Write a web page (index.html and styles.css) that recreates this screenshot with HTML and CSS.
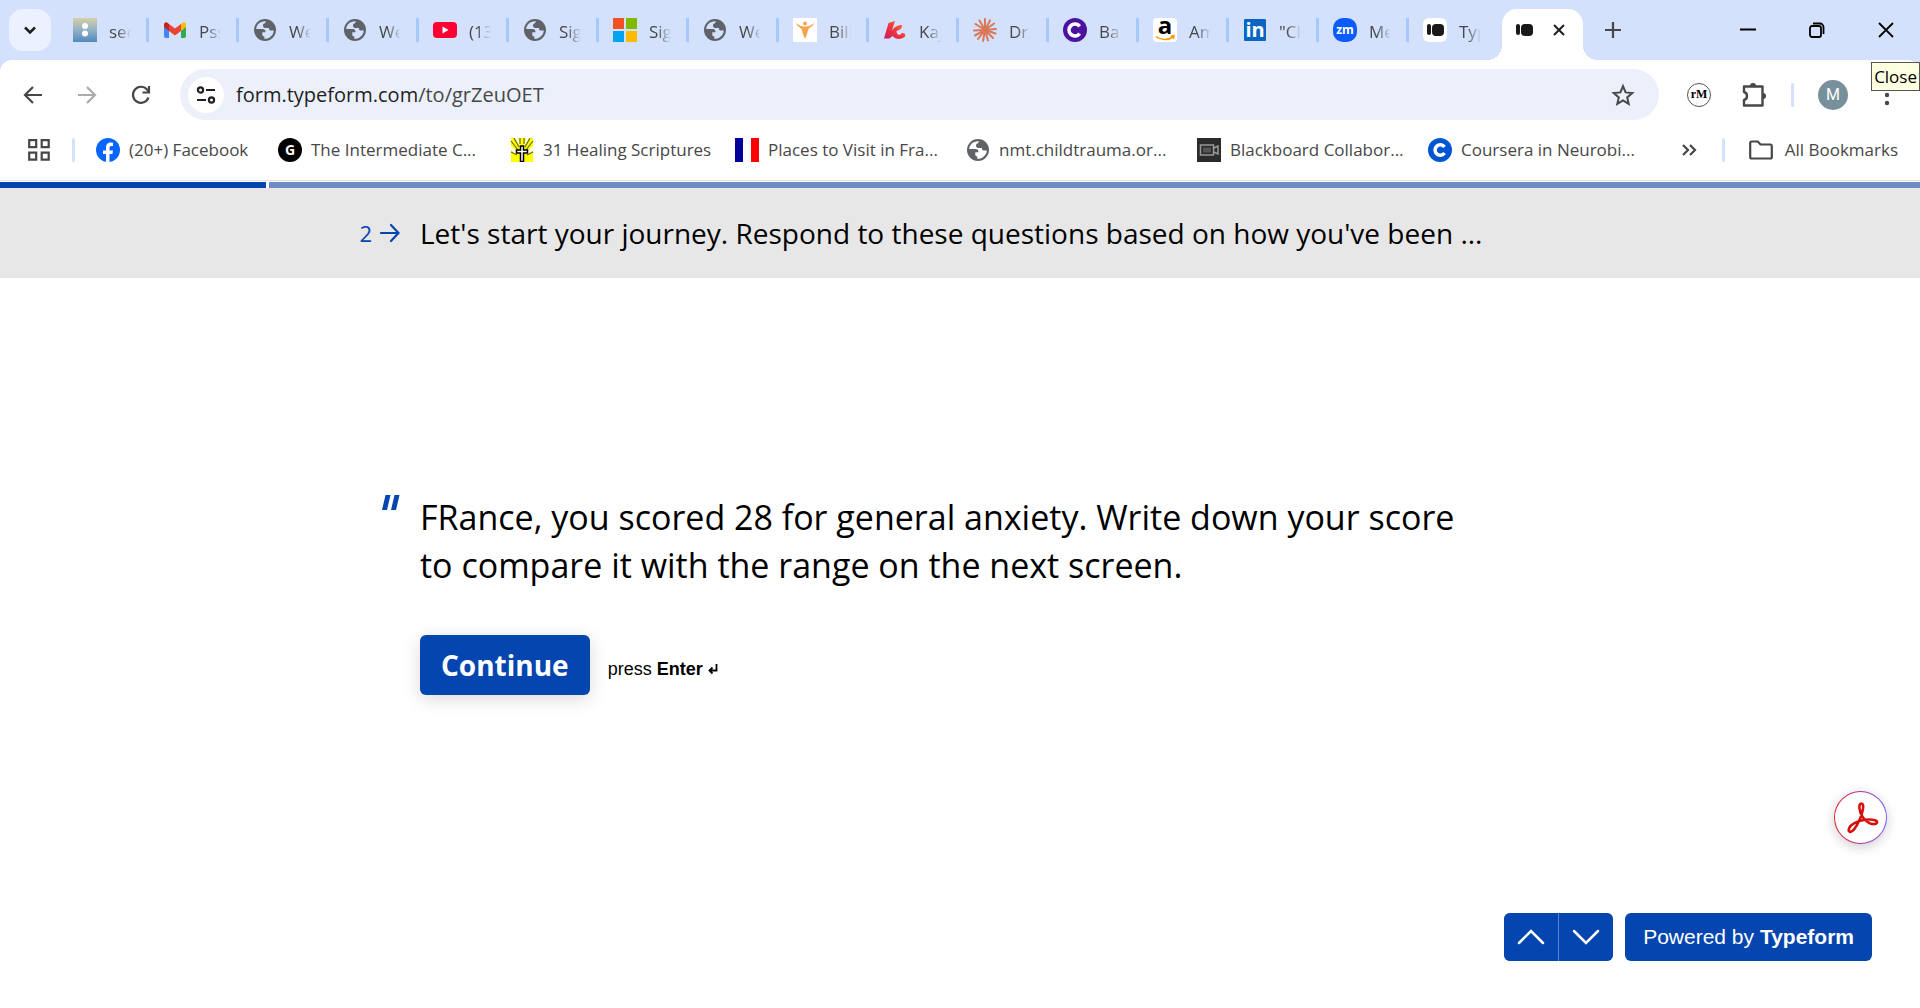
FILE: index.html
```
<!DOCTYPE html>
<html lang="en">
<head>
    <meta charset="UTF-8">
    <meta name="viewport" content="width=device-width, initial-scale=1.0">
    <title>Typeform</title>
    <link rel="stylesheet" href="styles.css">
</head>
<body>

    <!-- shared icons -->
    <svg class="sprite" aria-hidden="true">
        <symbol id="globe" viewBox="0 0 24 24">
            <circle cx="12" cy="12" r="11" fill="#5f6368"/>
            <path d="M13 3.200C7.500 2.700 3.500 6.500 3.200 11h6.300c2 0 3 1.200 3 3.200H9.300v2.600c0 1.200.8 1.700 2 1.700v2.300c5 .2 9.200-3.600 9.500-8.300h-3c-1.500 0-1.800-.8-1.800-2.500h-3.500c-1.800 0-2.500-1-2.500-2.400C10 5.800 11 5.500 12 5.300z" fill="currentColor"/>
        </symbol>
    </svg>

    <header class="browser">
        <div class="tab-strip">
            <button class="tab-search" aria-label="Search tabs">
                <svg width="14" height="14" viewBox="0 0 14 14"><path d="M2 4.500l5 5 5-5" fill="none" stroke="#1f1f1f" stroke-width="2.500"/></svg>
            </button>
            <nav class="tabs">
                <a class="tab" href="#">
                    <svg class="favicon" viewBox="0 0 24 24">
                        <defs><linearGradient id="sky" x1="0" y1="0" x2="0" y2="1"><stop offset="0" stop-color="#d6d0a8"/><stop offset=".5" stop-color="#93b2c6"/><stop offset="1" stop-color="#5189bd"/></linearGradient></defs>
                        <rect width="24" height="24" fill="url(#sky)"/><circle cx="12" cy="8" r="3" fill="#fff"/><circle cx="12" cy="15.500" r="3" fill="#fff"/>
                    </svg>
                    <span>sec</span>
                </a>
                <a class="tab" href="#">
                    <svg class="favicon" viewBox="0 0 24 24">
                        <path d="M1 7v11a2 2 0 0 0 2 2h3V10z" fill="#4285f4"/><path d="M23 7v11a2 2 0 0 1-2 2h-3V10z" fill="#34a853"/>
                        <path d="M18 6l1.500-1.300C21 3.500 23 4.500 23 6.500V9l-5 4z" fill="#fbbc04"/><path d="M6 6L4.500 4.700C3 3.500 1 4.500 1 6.500V9l5 4z" fill="#c5221f"/>
                        <path d="M6 6l6 4.500L18 6v7l-6 4.500L6 13z" fill="#ea4335"/>
                    </svg>
                    <span>Pss</span>
                </a>
                <a class="tab" href="#"><svg class="favicon globe"><use href="#globe"/></svg><span>We</span></a>
                <a class="tab" href="#"><svg class="favicon globe"><use href="#globe"/></svg><span>We</span></a>
                <a class="tab" href="#">
                    <svg class="favicon" viewBox="0 0 24 24"><rect y="4" width="24" height="16" rx="4" fill="#f03"/><path d="M9.500 8.500v7l6-3.500z" fill="#fff"/></svg>
                    <span>(13</span>
                </a>
                <a class="tab" href="#"><svg class="favicon globe"><use href="#globe"/></svg><span>Sig</span></a>
                <a class="tab" href="#">
                    <svg class="favicon" viewBox="0 0 24 24"><path d="M0 0h11v11H0z" fill="#f25022"/><path d="M13 0h11v11H13z" fill="#7fba00"/><path d="M0 13h11v11H0z" fill="#00a4ef"/><path d="M13 13h11v11H13z" fill="#ffb900"/></svg>
                    <span>Sig</span>
                </a>
                <a class="tab" href="#"><svg class="favicon globe"><use href="#globe"/></svg><span>We</span></a>
                <a class="tab" href="#">
                    <svg class="favicon" viewBox="0 0 24 24"><rect width="24" height="24" fill="#fff"/><circle cx="12" cy="5.500" r="2" fill="#f7a44c"/><path d="M2.500 4.500C6 8 9 8.500 12 8.500s6-.5 9.500-4c-1.500 4-5 5-6 6.500-1 2-1.500 7-3.500 9.500C10 18 9.500 13 8.500 11c-1-1.500-4.500-2.500-6-6.500z" fill="#f7a44c"/></svg>
                    <span>Bill</span>
                </a>
                <a class="tab" href="#">
                    <svg class="favicon" viewBox="0 0 24 24">
                        <defs><linearGradient id="flame" x1="0" y1="1" x2="1" y2="0"><stop offset="0" stop-color="#c3186a"/><stop offset=".5" stop-color="#f2383a"/><stop offset="1" stop-color="#ff7a3c"/></linearGradient></defs>
                        <path d="M5.500 5L12 3 9 12.500c2-3 5-5.500 10-5.500.5 3-2 5-5.500 6 0 3 1.500 4.500 4 3.500a2.300 2.300 0 1 1 4.500 2c-3 3-9.500 3.500-12.500-.5L6.500 20.500H1z" fill="url(#flame)"/>
                    </svg>
                    <span>Kaj</span>
                </a>
                <a class="tab" href="#">
                    <svg class="favicon" viewBox="0 0 24 24"><path d="M12 12V1M12 12l5-9.500M12 12l9-6.500M12 12l11-1M12 12l10.500 3.500M12 12l8 8M12 12l3 10.500M12 12l-2 11M12 12l-7 9M12 12L2 17.500M12 12L1 12.500M12 12L2.500 6M12 12L6.500 2.500" stroke="#d97757" stroke-width="2" stroke-linecap="round"/></svg>
                    <span>Dr.</span>
                </a>
                <a class="tab" href="#">
                    <svg class="favicon" viewBox="0 0 24 24"><circle cx="12" cy="12" r="12" fill="#4b12a1"/><path d="M16.700 8.300a6 6 0 1 0 0 7.400" fill="none" stroke="#fff" stroke-width="3.500"/></svg>
                    <span>Bas</span>
                </a>
                <a class="tab" href="#">
                    <svg class="favicon" viewBox="0 0 24 24"><rect width="24" height="24" rx="4" fill="#fff"/><text x="12" y="16" class="logo-amazon">a</text><path d="M3 18.500c5 4 12 4 17 .5M18 18l3-.3-.8 3" fill="none" stroke="#f90" stroke-width="1.600"/></svg>
                    <span>Am</span>
                </a>
                <a class="tab" href="#">
                    <svg class="favicon" viewBox="0 0 24 24"><rect x="1" y="1" width="22" height="22" rx="1" fill="#0a66c2"/><text x="12" y="19" class="logo-in">in</text></svg>
                    <span>"Cl</span>
                </a>
                <a class="tab" href="#">
                    <svg class="favicon" viewBox="0 0 24 24"><rect width="24" height="24" rx="10" fill="#0b5cff"/><text x="12" y="16" class="logo-zm">zm</text></svg>
                    <span>Me</span>
                </a>
                <a class="tab" href="#">
                    <svg class="favicon" viewBox="0 0 24 24"><rect width="24" height="24" rx="6" fill="#fff"/><rect x="4" y="6" width="4" height="11" rx="2" fill="#191919"/><rect x="9" y="6" width="12" height="12" rx="4" fill="#191919"/></svg>
                    <span>Typ</span>
                </a>
                <a class="tab active" href="#" aria-current="page" aria-label="Typeform">
                    <svg class="favicon" viewBox="0 0 24 24"><rect x="5" y="6" width="4" height="11" rx="2" fill="#191919"/><rect x="10" y="6" width="12" height="12" rx="4" fill="#191919"/></svg>
                    <svg width="12" height="12" viewBox="0 0 12 12"><path d="M1 1l10 10M11 1L1 11" stroke="#1f1f1f" stroke-width="2"/></svg>
                </a>
            </nav>
            <button class="new-tab" aria-label="New tab">
                <svg width="16" height="16" viewBox="0 0 16 16"><path d="M8 0v16M0 8h16" stroke="#474747" stroke-width="2.200"/></svg>
            </button>
            <div class="window-controls">
                <button aria-label="Minimize"><svg width="16" height="16" viewBox="0 0 16 16"><path d="M0 7.500h16" stroke="#000" stroke-width="2"/></svg></button>
                <button aria-label="Restore"><svg width="16" height="16" viewBox="0 0 16 16"><rect x="1" y="4" width="11" height="11" rx="2" fill="none" stroke="#000" stroke-width="1.800"/><path d="M4 1.500h7a3.500 3.500 0 0 1 3.500 3.500v7" fill="none" stroke="#000" stroke-width="1.800"/></svg></button>
                <button aria-label="Close"><svg width="16" height="16" viewBox="0 0 16 16"><path d="M1 1l14 14M15 1L1 15" stroke="#000" stroke-width="1.800"/></svg></button>
            </div>
        </div>

        <div class="toolbar">
            <button class="tool" aria-label="Back"><svg width="20" height="20" viewBox="0 0 20 20"><path d="M19 10H2.500M10 2l-8 8 8 8" fill="none" stroke="#474747" stroke-width="2.200"/></svg></button>
            <button class="tool" aria-label="Forward"><svg width="20" height="20" viewBox="0 0 20 20"><path d="M1 10h16.500M10 2l8 8-8 8" fill="none" stroke="#ababab" stroke-width="2.200"/></svg></button>
            <button class="tool" aria-label="Reload"><svg width="20" height="20" viewBox="0 0 20 20"><path d="M17.500 12.500A8 8 0 1 1 16 4.500l2 2M18 1v6.500h-6.500" fill="none" stroke="#474747" stroke-width="2.200"/></svg></button>
            <div class="omnibox">
                <button class="site-info" aria-label="View site information">
                    <svg width="20" height="20" viewBox="0 0 20 20" fill="none" stroke="#1f1f1f" stroke-width="2.200"><circle cx="4.500" cy="5" r="2.600"/><path d="M10 5h9M1 15h9"/><circle cx="15.500" cy="15" r="2.600"/></svg>
                </button>
                <a class="url" href="#">form.typeform.com<span>/to/grZeuOET</span></a>
                <button class="star" aria-label="Bookmark this tab">
                    <svg width="24" height="24" viewBox="0 0 24 24"><path d="M12 3.200l2.600 6.200 6.700.6-5.100 4.400 1.500 6.500-5.700-3.500-5.700 3.500 1.500-6.500L2.700 10l6.700-.6z" fill="none" stroke="#474747" stroke-width="2"/></svg>
                </button>
            </div>
            <div class="extensions">
                <button class="pinned" aria-label="reMarkable"><svg width="26" height="26" viewBox="0 0 26 26"><circle cx="13" cy="13" r="11.500" fill="#fff" stroke="#555" stroke-width="1"/><text x="13" y="16" class="logo-rm">rM</text></svg></button>
                <button aria-label="Extensions"><svg width="26" height="26" viewBox="0 0 26 26"><path d="M3 4.500h18.500v19H3v-5.500c4-1 4-7 0-8z" fill="none" stroke="#474747" stroke-width="2.400" stroke-linejoin="round"/><path d="M9 4a3 3 0 0 1 6 0zM22 11a3 3 0 0 1 0 6z" fill="#474747"/></svg></button>
                <i class="divider"></i>
                <button class="avatar" aria-label="Profile">M</button>
                <button aria-label="Menu"><svg width="26" height="26" viewBox="0 0 26 26" fill="#474747"><circle cx="13" cy="5" r="2.200"/><circle cx="13" cy="13" r="2.200"/><circle cx="13" cy="21" r="2.200"/></svg></button>
            </div>
        </div>

        <div class="bookmarks-bar">
            <button class="apps" aria-label="Apps"><svg width="22" height="22" viewBox="0 0 22 22" fill="none" stroke="#474747" stroke-width="2.200"><path d="M1.200 1.200h7v7h-7zM13.700 1.200h7v7h-7zM1.200 13.700h7v7h-7zM13.700 13.700h7v7h-7z"/></svg></button>
            <i class="divider"></i>
            <nav class="bookmarks">
                <a href="#"><svg class="favicon" viewBox="0 0 24 24"><circle cx="12" cy="12" r="12" fill="#0866ff"/><path d="M10 24v-8H7v-3.500h3V10c0-3.800 2-5.500 5-5.500l2 .2V8h-1.500c-1.500 0-2 .7-2 2v2.500h3.500l-.6 3.500h-2.900v8z" fill="#fff"/></svg>(20+) Facebook</a>
                <a href="#"><svg class="favicon" viewBox="0 0 24 24"><circle cx="12" cy="12" r="12"/><text x="12" y="17" class="logo-g">G</text></svg>The Intermediate C...</a>
                <a href="#"><svg class="favicon" viewBox="0 0 24 24"><path d="M1 0h22v24H1z" fill="#ff0"/><path d="M1 8l6 5v4l-6-5zM23 8l-6 5v4l6-5zM5 0h3l2 7H9zM19 0h-3l-2 7h1z" fill="#fff"/><path d="M1 3l7 9M4 0l5 9M23 3l-7 9M20 0l-5 9M10 0v6M14 0v6M1 14l6 3M23 14l-6 3" stroke="#6b6b00" stroke-width="1.200"/><path d="M10.500 8h3v4h4v3h-4v8.500h-3V15h-4v-3h4z" fill="#fff" stroke="#000" stroke-width="1.500"/></svg>31 Healing Scriptures</a>
                <a href="#"><svg class="favicon" viewBox="0 0 24 24"><path d="M0 0h8v24H0z" fill="#009"/><path d="M16 0h8v24h-8z" fill="red"/></svg>Places to Visit in Fra...</a>
                <a href="#"><svg class="favicon globe"><use href="#globe"/></svg>nmt.childtrauma.or...</a>
                <a href="#"><svg class="favicon" viewBox="0 0 24 24"><path d="M0 0h24v24H0z" fill="#2b2b2b"/><path d="M3.500 7h13v10h-13zM17 10l4-2v8l-4-2" fill="none" stroke="#999" stroke-width="1.500"/><path d="M6 9.500h8v5H6z" fill="#555"/></svg>Blackboard Collabor...</a>
                <a href="#"><svg class="favicon" viewBox="0 0 24 24"><circle cx="12" cy="12" r="12" fill="#0056d2"/><path d="M16.500 9a5.200 5.200 0 1 0 0 6" fill="none" stroke="#fff" stroke-width="3.500"/></svg>Coursera in Neurobi...</a>
            </nav>
            <button class="overflow" aria-label="More bookmarks"><svg width="16" height="14" viewBox="0 0 16 14"><path d="M2 2l5 5-5 5M9 2l5 5-5 5" fill="none" stroke="#474747" stroke-width="2.200"/></svg></button>
            <i class="divider"></i>
            <a class="all-bookmarks" href="#"><svg class="favicon" viewBox="0 0 24 24"><path d="M1.200 19V5a1.500 1.500 0 0 1 1.500-1.500h6L11.500 6.500h10A1.500 1.500 0 0 1 22.800 8v11a1.500 1.500 0 0 1-1.500 1.500H2.700A1.500 1.500 0 0 1 1.200 19z" fill="none" stroke="#474747" stroke-width="2.200"/></svg>All Bookmarks</a>
        </div>
        <div class="tooltip" role="tooltip">Close</div>
    </header>

    <div class="progress"><div class="progress-done"></div><div class="progress-left"></div></div>

    <section class="group-header row">
        <div class="marker">2
            <svg width="20" height="20" viewBox="0 0 20 20"><path d="M1 10h17M11 2l7.500 8-7.500 8" fill="none" stroke="#0445af" stroke-width="2.200" stroke-linecap="round"/></svg>
        </div>
        <h2>Let's start your journey. Respond to these questions based on how you've been ...</h2>
    </section>

    <main class="row">
        <div class="marker quote">
            <svg width="18" height="15" viewBox="0 0 18 15" fill="#0445af"><path d="M3.500 0h5L5 15H0zM12.500 0h5L14 15H9z"/></svg>
        </div>
        <div class="statement">
            <h1>FRance, you scored 28 for general anxiety. Write down your score to compare it with the range on the next screen.</h1>
            <div class="actions">
                <button class="continue">Continue</button>
                <span class="hint">press <b>Enter</b> <svg width="10" height="11" viewBox="0 0 10 11"><path d="M8.500 0v6.500H2M4.500 3.500l-3 3 3 3" fill="none" stroke="#000" stroke-width="1.800"/></svg></span>
            </div>
        </div>
    </main>

    <footer>
        <div class="nav-buttons">
            <button aria-label="Previous"><svg width="28" height="16" viewBox="0 0 28 16"><path d="M2 14L14 2l12 12" fill="none" stroke="#fff" stroke-width="2.500" stroke-linecap="round"/></svg></button>
            <button aria-label="Next"><svg width="28" height="16" viewBox="0 0 28 16"><path d="M2 2l12 12L26 2" fill="none" stroke="#fff" stroke-width="2.500" stroke-linecap="round"/></svg></button>
        </div>
        <a class="powered" href="#">Powered by <b>Typeform</b></a>
    </footer>

    <button class="acrobat" aria-label="Open in Acrobat">
        <svg width="36" height="36" viewBox="0 0 36 36"><path d="M18.500 3.500c-3.500 0-2.500 8.500 1.500 14 3.500 4.500 8.500 7 12 6.500 3.500-.8 2.500-4-2.500-4.300-6-.5-13.500 1-18.500 3.600-4.500 2.500-6.500 6.700-4.500 8.300 2.500 1.600 6.500-4 9.500-10.600C19.500 14 22 3.500 18.500 3.500z" fill="none" stroke="#d6110c" stroke-width="2.600"/></svg>
    </button>

</body>
</html>
```
FILE: styles.css
```
:root {
    --brand: #0445af;
    --strip: #d3e1fd;
    --icon: #474747;
    --ui-font: "Open Sans", "Noto Sans", sans-serif;
}

* {
    box-sizing: border-box;
}

body {
    margin: 0;
    min-height: 100vh;
    display: flex;
    flex-direction: column;
    position: relative;
    background: #fff;
    color: #000;
    font-family: var(--ui-font);
}

button {
    border: 0;
    padding: 0;
    background: none;
    font: inherit;
    color: inherit;
    cursor: pointer;
    display: flex;
    align-items: center;
    justify-content: center;
}

a {
    color: inherit;
    text-decoration: none;
}

h1, h2 {
    margin: 0;
    font-weight: 400;
}

.sprite {
    display: none;
}

.favicon {
    width: 24px;
    height: 24px;
    flex: none;
}

.globe {
    color: #fff;
}

.tab .globe {
    color: var(--strip);
}

.divider {
    width: 3px;
    height: 24px;
    border-radius: 2px;
    background: var(--strip);
    flex: none;
}

/* Tab strip */
.browser {
    background: var(--strip);
    border-bottom: 1px solid #dfe1e5;
}

.tab-strip {
    height: 60px;
    display: flex;
    align-items: center;
    padding-left: 9px;
}

.tab-search {
    width: 42px;
    height: 42px;
    border-radius: 14px;
    background: #ebf1fe;
}

.tabs {
    display: flex;
    align-self: stretch;
    margin-left: 9px;
}

.tab {
    width: 90px;
    display: flex;
    align-items: center;
    gap: 12px;
    padding-left: 13px;
    font-size: 17px;
    color: var(--icon);
    background: linear-gradient(#a8c7fa, #a8c7fa) no-repeat 86px 18px / 3px 24px;
}

.tab span {
    width: 22px;
    padding-top: 2px;
    overflow: hidden;
    white-space: nowrap;
    -webkit-mask-image: linear-gradient(90deg, #000 35%, transparent);
    mask-image: linear-gradient(90deg, #000 35%, transparent);
}

.tab:nth-last-child(2) {
    background: none;
}

.tab.active {
    width: 81px;
    margin: 9px 0 0 2px;
    padding: 0 18px 9px 9px;
    justify-content: space-between;
    background: #fff;
    border-radius: 15px 15px 0 0;
    position: relative;
}

.tab.active::before,
.tab.active::after {
    content: "";
    position: absolute;
    bottom: 0;
    width: 15px;
    height: 15px;
}

.tab.active::before {
    right: 100%;
    background: radial-gradient(circle at 0 0, transparent 15px, #fff 15px);
}

.tab.active::after {
    left: 100%;
    background: radial-gradient(circle at 100% 0, transparent 15px, #fff 15px);
}

.new-tab {
    width: 42px;
    height: 42px;
    margin-left: 9px;
}

.window-controls {
    display: flex;
    align-self: stretch;
    margin-left: auto;
}

.window-controls button {
    width: 69px;
}

/* Toolbar */
.toolbar {
    height: 69px;
    display: flex;
    align-items: center;
    padding-left: 6px;
    background: #fff;
    border-radius: 12px 12px 0 0;
}

.tool {
    width: 54px;
    height: 42px;
}

.omnibox {
    flex: 1;
    height: 51px;
    display: flex;
    align-items: center;
    margin-left: 12px;
    padding: 0 24px 0 8px;
    border-radius: 26px;
    background: #ecf0fa;
}

.site-info {
    width: 36px;
    height: 36px;
    border-radius: 50%;
    background: #fff;
}

.url {
    flex: 1;
    margin-left: 12px;
    font-size: 20px;
    color: #1f1f1f;
}

.url span {
    color: var(--icon);
}

.extensions {
    display: flex;
    align-items: center;
    gap: 26px;
    padding: 0 20px 0 27px;
}

.extensions .divider {
    margin: 0 -2px;
}

.pinned {
    margin-right: 3px;
}

.avatar {
    width: 30px;
    height: 30px;
    border-radius: 50%;
    background: #78909c;
    color: #fff;
    font: 16px Roboto, sans-serif;
}

/* Bookmarks bar */
.bookmarks-bar {
    height: 51px;
    display: flex;
    align-items: center;
    padding: 0 22px 10px 28px;
    background: #fff;
    font-size: 17px;
    color: var(--icon);
}

.bookmarks-bar .divider {
    margin: 0 21px 0 22px;
}

.bookmarks {
    flex: 1;
    display: grid;
    grid-template-columns: 182px 232px 225px 231px 231px 231px auto;
    white-space: nowrap;
}

.bookmarks a,
.all-bookmarks {
    display: flex;
    align-items: center;
    gap: 9px;
}

.overflow {
    margin-right: 3px;
}

.all-bookmarks {
    gap: 12px;
    margin-left: 3px;
}

.tooltip {
    position: absolute;
    top: 62px;
    right: 0;
    padding: 0 2px;
    border: 1px solid #555;
    background: #ffffe1;
    color: #000;
    font-size: 17px;
    line-height: 27px;
}

/* Form */
.progress {
    display: flex;
    gap: 3px;
    padding-top: 1px;
    height: 7px;
}

.progress-done {
    width: 266px;
    background: var(--brand);
}

.progress-left {
    flex: 1;
    background: #6b8cc9;
}

.row {
    display: grid;
    grid-template-columns: 1fr minmax(0, 1080px) 1fr;
}

.marker {
    justify-self: end;
    display: flex;
    align-items: center;
    gap: 8px;
    margin-right: 20px;
    font-size: 22px;
    color: var(--brand);
}

.group-header {
    height: 90px;
    align-items: center;
    background: #e7e7e7;
}

.group-header h2 {
    font-size: 28px;
    line-height: 36px;
    white-space: nowrap;
}

main {
    flex: 1;
    align-content: center;
    padding-bottom: 4px;
}

.quote {
    align-self: start;
    margin-top: 2px;
}

.statement h1 {
    max-width: 1060px;
    font-size: 34px;
    line-height: 48px;
}

.actions {
    display: flex;
    align-items: center;
    gap: 18px;
    margin-top: 46px;
}

.continue {
    height: 60px;
    padding: 0 21px;
    border-radius: 6px;
    background: var(--brand);
    color: #fff;
    font-size: 28px;
    font-weight: 700;
    box-shadow: 0 4px 18px rgba(0, 0, 0, 0.15);
}

.hint {
    padding-top: 9px;
    font: 18px "Liberation Sans", Arial, sans-serif;
}

footer {
    display: flex;
    justify-content: flex-end;
    gap: 12px;
    padding: 0 48px 47px;
    color: #fff;
}

.nav-buttons {
    display: flex;
    gap: 1px;
    border-radius: 6px;
    background: #5a83ca;
}

.nav-buttons button {
    width: 54px;
    height: 48px;
    border-radius: 6px 0 0 6px;
    background: var(--brand);
}

.nav-buttons button:last-child {
    border-radius: 0 6px 6px 0;
}

.powered {
    padding: 0 18px;
    border-radius: 6px;
    background: var(--brand);
    font: 21px/48px "Liberation Sans", Arial, sans-serif;
}

.acrobat {
    position: absolute;
    right: 33px;
    bottom: 164px;
    width: 53px;
    height: 53px;
    border: 1px solid transparent;
    border-radius: 50%;
    background: linear-gradient(#fff, #fff) padding-box, linear-gradient(90deg, #e0252b, #b0309c, #7a5cf5) border-box;
    box-shadow: 0 3px 12px rgba(0, 0, 0, 0.2);
}

/* Lettered logos */
.logo-amazon,
.logo-in,
.logo-zm,
.logo-g,
.logo-rm {
    text-anchor: middle;
    font-family: "Open Sans", sans-serif;
    font-weight: 700;
    fill: #fff;
}

.logo-amazon {
    font-size: 24px;
    fill: #000;
}

.logo-in {
    font-size: 20px;
}

.logo-zm {
    font-size: 12px;
}

.logo-g {
    font-size: 14px;
}

.logo-rm {
    font-family: "Liberation Serif", serif;
    font-size: 12px;
    fill: #000;
}
```
